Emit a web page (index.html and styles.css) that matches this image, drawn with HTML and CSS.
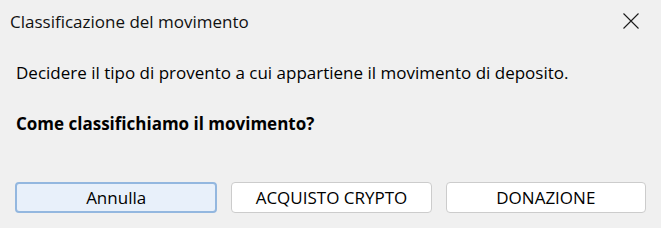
FILE: index.html
```html
<!DOCTYPE html>
<html lang="it">
<head>
    <meta charset="UTF-8">
    <title>Classificazione del movimento</title>
    <link rel="stylesheet" href="styles.css">
</head>
<body>
    <div class="dialog">
        <div class="titlebar">
            <span class="title">Classificazione del movimento</span>
            <button class="close" aria-label="Chiudi">
                <svg width="16" height="16" viewBox="0 0 16 16">
                    <path d="M0.5 0.5 L15.5 15.5 M15.5 0.5 L0.5 15.5" stroke="#1a1a1a" stroke-width="1.1" fill="none"/>
                </svg>
            </button>
        </div>

        <div class="content">
            <p class="message">Decidere il tipo di provento a cui appartiene il movimento di deposito.</p>
            <p class="question">Come classifichiamo il movimento?</p>
        </div>

        <div class="actions">
            <button class="btn btn-default">Annulla</button>
            <button class="btn">ACQUISTO CRYPTO</button>
            <button class="btn">DONAZIONE</button>
        </div>
    </div>
</body>
</html>
```

FILE: styles.css
```css
* {
    margin: 0;
    padding: 0;
    box-sizing: border-box;
}

body {
    background: #f0f0f0;
    font-family: 'Open Sans', 'Noto Sans', sans-serif;
    color: #000;
    font-size: 17px;
}

.dialog {
    width: 661px;
    height: 228px;
    display: flex;
    flex-direction: column;
}

.titlebar {
    height: 42px;
    display: flex;
    align-items: center;
    justify-content: space-between;
    padding: 0 22px 0 10px;
}

.title {
    font-size: 17px;
    color: #111;
}

.close {
    border: none;
    background: none;
    width: 16px;
    height: 16px;
    display: flex;
}

.content {
    padding: 19px 16px 0;
    display: flex;
    flex-direction: column;
    gap: 28px;
    line-height: 23px;
}

.question {
    font-weight: 700;
}

.actions {
    margin-top: auto;
    padding: 0 15px 15px;
    display: flex;
    gap: 14px;
}

.btn {
    flex: 1;
    height: 31px;
    font-family: inherit;
    font-size: 17px;
    color: #000;
    background: #fff;
    border: 1px solid #cccccc;
    border-radius: 4px;
}

.btn-default {
    background: #e8f0fa;
    border: 2px solid #93b7df;
}
```
